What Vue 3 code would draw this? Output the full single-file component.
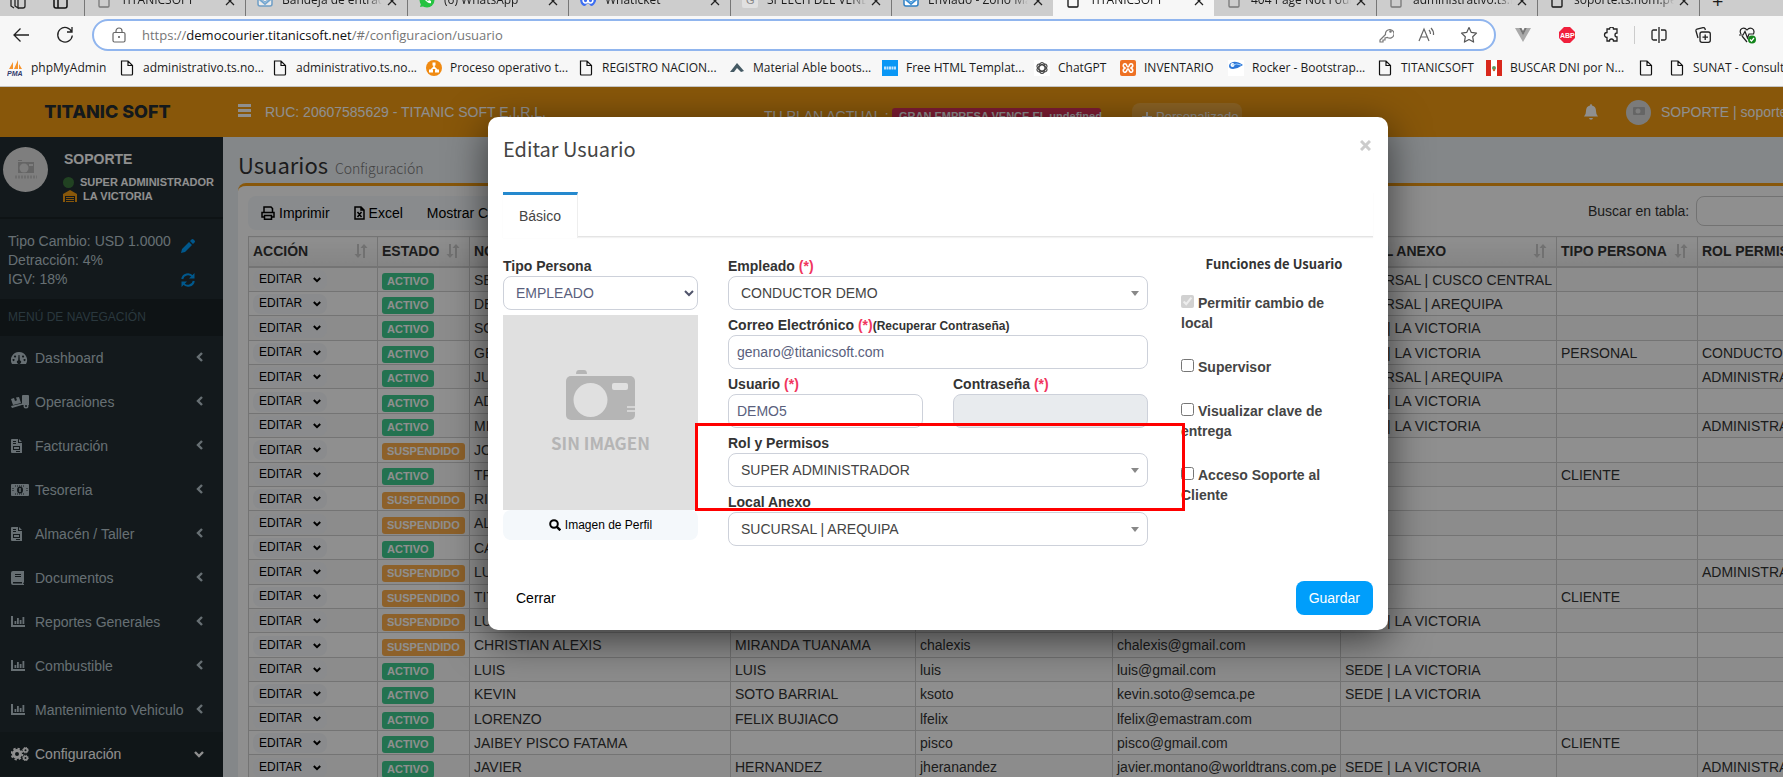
<script setup>
import { ref } from 'vue'

const tabs = [
  { title: 'TITANICSOFT', icon: 'doc' },
  { title: 'Bandeja de entrada', icon: 'mail', dim: true },
  { title: '(6) WhatsApp', icon: 'whats' },
  { title: 'Whaticket', icon: 'ticket' },
  { title: 'SPEECH DEL VENDEDOR', icon: 'g' },
  { title: 'Enviado - Zoho Mail', icon: 'mail' },
  { title: 'TITANICSOFT', icon: 'doc', active: true },
  { title: '404 Page Not Found', icon: 'doc' },
  { title: 'administrativo.ts.nom', icon: 'doc' },
  { title: 'soporte.ts.nom.pe/', icon: 'doc', dark: true }
]

const bookmarks = [
  { title: 'phpMyAdmin', icon: 'pma' },
  { title: 'administrativo.ts.no...', icon: 'doc' },
  { title: 'administrativo.ts.no...', icon: 'doc' },
  { title: 'Proceso operativo t...', icon: 'proc' },
  { title: 'REGISTRO NACION...', icon: 'doc' },
  { title: 'Material Able boots...', icon: 'able' },
  { title: 'Free HTML Templat...', icon: 'free' },
  { title: 'ChatGPT', icon: 'gpt' },
  { title: 'INVENTARIO', icon: 'xampp' },
  { title: 'Rocker - Bootstrap...', icon: 'rocker' },
  { title: 'TITANICSOFT', icon: 'doc' },
  { title: 'BUSCAR DNI por N...', icon: 'peru' },
  { title: '', icon: 'doc' },
  { title: 'SUNAT - Consulta', icon: 'doc' }
]

const menu = [
  { label: 'Dashboard', icon: 'gauge' },
  { label: 'Operaciones', icon: 'truck' },
  { label: 'Facturación', icon: 'file' },
  { label: 'Tesoreria', icon: 'money' },
  { label: 'Almacén / Taller', icon: 'file' },
  { label: 'Documentos', icon: 'book' },
  { label: 'Reportes Generales', icon: 'chart' },
  { label: 'Combustible', icon: 'chart' },
  { label: 'Mantenimiento Vehiculo', icon: 'chart' },
  { label: 'Configuración', icon: 'cogs', open: true }
]

const columns = ['ACCIÓN', 'ESTADO', 'NOMBRES', 'APELLIDOS', 'USUARIO', 'CORREO', 'LOCAL ANEXO', 'TIPO PERSONA', 'ROL PERMISOS']

const LV = 'SEDE | LA VICTORIA'
const AQ = 'SUCURSAL | AREQUIPA'
const rows = [
  [1, 'SE', '', '', '', 'SUCURSAL | CUSCO CENTRAL', '', ''],
  [1, 'DE', '', '', '', AQ, '', ''],
  [1, 'SO', '', '', '', LV, '', ''],
  [1, 'GE', '', '', '', LV, 'PERSONAL', 'CONDUCTOR'],
  [1, 'JU', '', '', '', AQ, '', 'ADMINISTRADOR'],
  [1, 'AD', '', '', '', LV, '', ''],
  [1, 'MI', '', '', '', LV, '', 'ADMINISTRADOR'],
  [0, 'JO', '', '', '', '', '', ''],
  [1, 'TR', '', '', '', '', 'CLIENTE', ''],
  [0, 'RI', '', '', '', '', '', ''],
  [0, 'AL', '', '', '', '', '', ''],
  [1, 'CA', '', '', '', '', '', ''],
  [0, 'LU', '', '', '', '', '', 'ADMINISTRADOR'],
  [0, 'TIT', '', '', '', '', 'CLIENTE', ''],
  [0, 'LU', '', '', '', LV, '', ''],
  [0, 'CHRISTIAN ALEXIS', 'MIRANDA TUANAMA', 'chalexis', 'chalexis@gmail.com', '', '', ''],
  [1, 'LUIS', 'LUIS', 'luis', 'luis@gmail.com', LV, '', ''],
  [1, 'KEVIN', 'SOTO BARRIAL', 'ksoto', 'kevin.soto@semca.pe', LV, '', ''],
  [1, 'LORENZO', 'FELIX BUJIACO', 'lfelix', 'lfelix@emastram.com', '', '', ''],
  [1, 'JAIBEY PISCO FATAMA', '', 'pisco', 'pisco@gmail.com', '', 'CLIENTE', ''],
  [1, 'JAVIER', 'HERNANDEZ', 'jheranandez', 'javier.montano@worldtrans.com.pe', LV, '', 'ADMINISTRADOR']
]

const functions = ref([
  { id: 'f-local', label: 'Permitir cambio de local', on: true, off: true },
  { id: 'f-super', label: 'Supervisor', on: false, off: false },
  { id: 'f-clave', label: 'Visualizar clave de entrega', on: false, off: false },
  { id: 'f-soporte', label: 'Acceso Soporte al Cliente', on: false, off: false }
])
const email = ref('genaro@titanicsoft.com')
const user = ref('DEMO5')
const search = ref('')
</script>

<template>
  <div class="screen">
    <header class="chrome">
      <nav class="tabs">
        <div class="lead">
          <svg width="18" height="18" viewBox="0 0 18 18" fill="none" stroke="#222" stroke-width="1.3"><path d="M2 4v9l3 2M6 3v10l3 2V4M9 15h5q2 0 2-2V5q0-2-2-2H9" /></svg>
          <svg width="18" height="18" viewBox="0 0 18 18" fill="none" stroke="#111" stroke-width="1.5"><rect x="3" y="2" width="13" height="13" rx="2" /><path d="M7 2v13M3 6h13" /></svg>
        </div>
        <div v-for="(t, i) in tabs" :key="i" class="tab" :class="{ active: t.active, quiet: t.dim }">
          <svg class="fav" width="16" height="16" viewBox="0 0 16 16">
            <path v-if="t.icon === 'doc'" d="M3 1h7l3 3v10q0 1-1 1H4q-1 0-1-1z" fill="none" :stroke="t.active || t.dark ? '#111' : '#777'" stroke-width="1.3" />
            <g v-else-if="t.icon === 'mail'"><rect x="1" y="1" width="14" height="13" rx="2" fill="#fff" stroke="#2f7fc2" stroke-width="1.5" /><path d="M2 7l6 5 6-5" fill="none" stroke="#3b8fd4" stroke-width="1.8" /><path d="M4 3h8v4l-4 3-4-3z" fill="#fff" stroke="#3b8fd4" /></g>
            <g v-else-if="t.icon === 'whats'"><circle cx="8" cy="8" r="7.5" fill="#25c341" /><path d="M1 15l1.500-5 4 4z" fill="#25c341" /><path d="M5 4q-1 2 2 5t5 2l0-2-2-1-1 1q-2-1-2-2l1-1-1-2z" fill="#fff" /></g>
            <g v-else-if="t.icon === 'ticket'"><path d="M0 3h16v6q-2 5-5 5l-3-3-3 3q-4 0-5-6z" fill="#3d6ef0" /><path d="M3 7q0 4 2.500 4T8 7q0 4 2.500 4T13 7" fill="none" stroke="#fff" stroke-width="1.500" /></g>
            <g v-else><rect width="16" height="16" rx="2" fill="#e0e0e0" /><text x="4" y="12" font-size="11" font-family="Liberation Sans, sans-serif" fill="#888">G</text></g>
          </svg>
          <span class="tab-title">{{ t.title }}</span>
          <svg width="10" height="10" viewBox="0 0 10 10" stroke="#222" stroke-width="1.3"><path d="M1 1l8 8M9 1L1 9" /></svg>
        </div>
        <span class="plus">+</span>
      </nav>

      <div class="toolbar">
        <svg width="18" height="18" viewBox="0 0 18 18" fill="none" stroke="#222" stroke-width="1.300"><path d="M17 9H2M8.500 2.500L2 9l6.500 6.500" /></svg>
        <svg width="18" height="18" viewBox="0 0 18 18" fill="none" stroke="#222" stroke-width="1.300"><path d="M15.800 6A7.300 7.300 0 1 0 16.300 9.500M16 1v5h-5" /></svg>
        <div class="address">
          <svg width="14" height="16" viewBox="0 0 14 16" fill="none" stroke="#666" stroke-width="1.200"><rect x="1" y="5.500" width="12" height="9.500" rx="1.500" /><path d="M4 5.500V4a3 3 0 0 1 6 0v1.500" /><circle cx="7" cy="10" r="1" fill="#555" stroke="none" /></svg>
          <p class="url">https://<b>democourier.titanicsoft.net</b>/#/configuracion/usuario</p>
          <svg width="18" height="16" viewBox="-4 0 18 16" fill="none" stroke="#777" stroke-width="1.200"><path d="M5.500 7.500L0 13v2h3v-2h2v-2l2.500-.5A4.300 4.300 0 1 0 5.500 7.500z" /><circle cx="10.500" cy="4.500" r=".7" fill="#777" /></svg>
          <svg width="18" height="16" viewBox="0 0 18 16" fill="none" stroke="#666" stroke-width="1.200"><path d="M1 14L6 2l5 12M3 10h6M11 3q1.500 1.500 1.500 4M13 1q3 3 2.500 7" /></svg>
          <svg width="18" height="18" viewBox="0 0 18 18" fill="none" stroke="#555" stroke-width="1.200" stroke-linejoin="round"><path d="M9 1.500l2.300 4.900 5.200.7-3.800 3.700.9 5.300L9 13.500l-4.600 2.600.9-5.300L1.500 7.100l5.200-.7z" /></svg>
        </div>
        <div class="tools">
          <svg width="16" height="16" viewBox="0 0 16 16"><path d="M0 1h4l4 7 4-7h4L8 15z" fill="#aaa" /><path d="M4 1h2.500L8 4l1.500-3H12L8 8.500z" fill="#777" /></svg>
          <svg width="16" height="16" viewBox="0 0 16 16"><path d="M5 0h6l5 5v6l-5 5H5l-5-5V5z" fill="#f0203c" /><text x="1" y="11" font-size="7" font-weight="700" font-family="Liberation Sans, sans-serif" fill="#fff">ABP</text></svg>
          <svg width="16" height="16" viewBox="0 0 16 16" fill="none" stroke="#222" stroke-width="1.300"><path d="M4 2h2.500a2 2 0 0 1 4 0H14v4a2 2 0 0 0 0 4v4h-3.500a2 2 0 0 0-4 0H4v-3.500a2.300 2.300 0 0 1 0-5z" /></svg>
          <i class="rule"></i>
          <svg width="16" height="16" viewBox="0 0 16 16" fill="none" stroke="#222" stroke-width="1.300"><path d="M8 0v16M6 3H2.500Q1 3 1 4.500v7Q1 13 2.500 13H6M10 3h3.500Q15 3 15 4.500v7q0 1.500-1.500 1.500H10" /></svg>
          <svg width="16" height="16" viewBox="0 0 16 16" fill="none" stroke="#222" stroke-width="1.300"><rect x="5" y="5" width="10.300" height="10.300" rx="2" /><path d="M10.200 7.500v5.500M7.500 10.200H13M3 11L1 4q-.3-1.500 1-2l6-1.300q1.500-.2 2 1l.4 1.300" /></svg>
          <svg width="17" height="17" viewBox="0 0 17 17" fill="none" stroke="#222" stroke-width="1.200"><path d="M2 7Q0 3 3 1.500 6 .5 8 3q2-2.500 5-1.500 3 1.500 1.500 5.500M3 9l5 6M0 8h4l2-3.500L8.500 11 10 7h5" /><circle cx="13" cy="12.500" r="4" fill="#13851b" stroke="none" /><path d="M11 12.500l1.500 1.500 2.500-3" stroke="#fff" /></svg>
        </div>
      </div>

      <div class="bookmarks">
        <a v-for="(b, i) in bookmarks" :key="i" class="bookmark" href="#">
          <svg width="16" height="16" viewBox="0 0 16 16">
            <path v-if="b.icon === 'doc'" d="M2.500 1h6.500l4.500 4.500V14q0 1-1 1h-9q-1 0-1-1zM9 1v4.500h4.500" fill="none" stroke="#111" stroke-width="1.200" />
            <g v-else-if="b.icon === 'pma'"><path d="M2 9L6 2v7zM7 9l4-9v9zM12 9V4l3 5z" fill="#f6932b" /><text x="0" y="16" font-size="7" font-weight="700" font-style="italic" font-family="Liberation Sans, sans-serif" fill="#333a6d">PMA</text></g>
            <g v-else-if="b.icon === 'proc'"><circle cx="8" cy="8" r="8" fill="#f08a12" /><path d="M8 4v5M8 7l-3 3M8 7l3 3" stroke="#fff" stroke-width="1.500" /><path d="M6.500 2.500h3v3h-3zM3 9.500h4v3H3zM9 9.500h4v3H9z" fill="#fff" /></g>
            <path v-else-if="b.icon === 'able'" d="M1 12L8 3l7 8-3 1-4-4-3 4z" fill="#455a64" />
            <g v-else-if="b.icon === 'free'"><rect width="16" height="16" fill="#0a97f5" /><path d="M2 8h12" stroke="#bfe4ff" stroke-width="3" stroke-dasharray="2 .5" /></g>
            <g v-else-if="b.icon === 'gpt'" fill="none" stroke="#444" stroke-width="1.200"><rect width="16" height="16" fill="#fff" stroke="none" /><ellipse cx="8" cy="8" rx="3" ry="5.500" /><ellipse cx="8" cy="8" rx="3" ry="5.500" transform="rotate(60 8 8)" /><ellipse cx="8" cy="8" rx="3" ry="5.500" transform="rotate(120 8 8)" /></g>
            <g v-else-if="b.icon === 'xampp'"><rect width="16" height="16" rx="2" fill="#ee7123" /><path d="M4 4q2-1 3 2 1 2 2 0 1-3 3-2 2 2-1 4 3 2 1 4-2 1-3-2-1-2-2 0-1 3-3 2-2-2 1-4-3-2-1-4z" fill="none" stroke="#fff" stroke-width="1.600" /></g>
            <g v-else-if="b.icon === 'rocker'"><rect width="16" height="16" fill="#fff" /><path d="M15 5Q9 1 5 2T1 6q0 3 4 3 6-1 10-4z" fill="#2d77d8" /><circle cx="4.500" cy="5" r="2" fill="#fff" /><path d="M4 5q5-2 9 0" stroke="#9fd0ff" fill="none" /></g>
            <g v-else><rect width="16" height="16" fill="#fff" /><path d="M0 0h5v16H0zM11 0h5v16h-5z" fill="#d9281c" /><circle cx="8" cy="8" r="2" fill="#5a9a62" /><circle cx="8" cy="10" r="1.200" fill="#c8642f" /></g>
          </svg>
          <span>{{ b.title }}</span>
        </a>
      </div>
    </header>

    <div class="page">
      <header class="topbar">
        <a class="brand" href="#">TITANIC SOFT</a>
        <button class="burger" type="button" aria-label="Menú"><i></i><i></i><i></i></button>
        <span class="ruc">RUC: 20607585629 - TITANIC SOFT E.I.R.L.</span>
        <span class="plan">TU PLAN ACTUAL :</span>
        <span class="plan-badge">GRAN EMPRESA VENCE EL undefined</span>
        <button class="custom" type="button">
          <svg width="10" height="10" viewBox="0 0 10 10"><path d="M4 0h2v4h4v2H6v4H4V6H0V4h4z" fill="#fff" /></svg>Personalizado
        </button>
        <svg class="bell" width="14" height="16" viewBox="0 0 14 16" fill="#fff"><path d="M7 0q1 0 1 1.500 4 .8 4 5.500 0 4 2 5.500H0Q2 11 2 7q0-4.700 4-5.500Q6 0 7 0zM5 14h4q-.3 1.700-2 1.700T5 14z" /></svg>
        <span class="mini-avatar"><svg width="12" height="10" viewBox="0 0 12 10"><rect width="12" height="8" rx="1" fill="#b5b5b5" /><circle cx="5" cy="4" r="2.500" fill="#e0e0e0" /></svg></span>
        <span class="who">SOPORTE | soporte</span>
      </header>

      <div class="body">
        <aside class="sidebar">
          <div class="profile">
            <span class="avatar"><svg width="24" height="24" viewBox="0 0 24 24"><path d="M4 3h4V2H4zM4 4h16v11H4z" fill="#b5b5b5" /><circle cx="10" cy="10" r="4.500" fill="#e0e0e0" /><path d="M15 6h4v2h-4z" fill="#e0e0e0" /><path d="M1 19h22" stroke="#c4c4c4" stroke-width="3" stroke-dasharray="2 1" /></svg></span>
            <div>
              <strong>SOPORTE</strong>
              <p class="role"><i class="dot"></i>SUPER ADMINISTRADOR</p>
              <p class="place"><svg width="14" height="12" viewBox="0 0 14 12"><path d="M0 4l7-4 7 4v8h-2V6H2v6H0zM3 7h8v1H3zM3 9h8v1H3zM3 11h8v1H3z" fill="#f39c12" /></svg>LA VICTORIA</p>
            </div>
          </div>
          <div class="rates">
            <p>Tipo Cambio: USD 1.0000<br />Detracción: 4%<br />IGV: 18%</p>
            <div class="rate-icons">
              <svg width="14" height="14" viewBox="0 0 14 14" fill="#009efb"><path d="M0 14l1-4 7-7 3 3-7 7zM9 2l1.500-1.500q1-1 2 0l1 1q1 1 0 2L12 5z" /></svg>
              <svg width="14" height="14" viewBox="0 0 14 14" fill="none" stroke="#009efb" stroke-width="2"><path d="M1.200 6A5.800 5.800 0 0 1 11.500 3.500M12.800 8A5.800 5.800 0 0 1 2.500 10.500" /><path d="M13.500 0v5.500H8zM.500 14V8.500H6z" fill="#009efb" stroke="none" /></svg>
            </div>
          </div>
          <h4>MENÚ DE NAVEGACIÓN</h4>
          <a v-for="m in menu" :key="m.label" class="item" :class="{ open: m.open }" href="#">
            <svg width="18" height="14" viewBox="0 0 18 14" fill="currentColor">
              <path v-if="m.icon === 'gauge'" fill-rule="evenodd" d="M8 1a8 8 0 0 1 7 12H1A8 8 0 0 1 8 1zM7.500 4l-.3 5.200a2 2 0 1 0 1.600 0L8.500 4zM4 4.500a1 1 0 1 0 .1 0zM12 4.500a1 1 0 1 0 .1 0zM2.500 8a1 1 0 1 0 .1 0zM13.500 8a1 1 0 1 0 .1 0z" />
              <g v-else-if="m.icon === 'truck'"><path d="M0 4l3-1 1 3 2-.7L5 2.500 8 2l2 6-8 2zM0 11l11-2.500V1q0-1 1-1h5q1 0 1 1v9H11L1 13z" /><circle cx="15" cy="11" r="2.500" /><circle cx="15" cy="11" r="1" fill="#222d32" /></g>
              <path v-else-if="m.icon === 'file'" fill-rule="evenodd" d="M1 0h6v4h4v10H1q-1 0-1-1V1q0-1 1-1zM8 0l3 3H8zM2 2v1h3V2zM2 4v1h3V4zM2 7v4h7V7zM3 8h5v2H3zM5 12v1h4v-1z" />
              <g v-else-if="m.icon === 'money'"><rect y="1" width="18" height="12" rx="1" /><path d="M4 3h10M4 11h10M2 5v4M16 5v4" stroke="#222d32" stroke-dasharray="1 1" /><ellipse cx="9" cy="7" rx="3" ry="3.500" fill="#222d32" /><path d="M9 5v4" stroke="currentColor" stroke-width="1.500" /></g>
              <path v-else-if="m.icon === 'book'" fill-rule="evenodd" d="M2 0h11v11l-1 2h1v1H2q-2 0-2-2V2q0-2 2-2zM4 3v1h6V3zM4 5v1h6V5zM2 11v1.500h9V11z" />
              <path v-else-if="m.icon === 'chart'" d="M0 1h2v9h12v2H0zM3.500 6h1.800v3H3.500zM6 3h1.800v6H6zM8.700 5h1.800v4H8.700zM11.500 2h1.800v7h-1.800z" />
              <g v-else fill="none" stroke="currentColor"><circle cx="6" cy="7" r="3.500" stroke-width="3" /><circle cx="6" cy="7" r="5.500" stroke-width="1.800" stroke-dasharray="2.300 2" /><circle cx="14.500" cy="3.200" r="1.800" stroke-width="1.600" /><circle cx="14.500" cy="11" r="1.800" stroke-width="1.600" /><circle cx="14.500" cy="3.200" r="2.800" stroke-dasharray="1.200 1" /><circle cx="14.500" cy="11" r="2.800" stroke-dasharray="1.200 1" /></g>
            </svg>
            <span>{{ m.label }}</span>
            <svg class="arrow" width="10" height="12" viewBox="0 0 10 12" fill="none" stroke="currentColor" stroke-width="2.400"><path :d="m.open ? 'M1 4l4 4 4-4' : 'M8 1L4 5l4 4'" /></svg>
          </a>
        </aside>

        <main class="content">
          <h1>Usuarios <small>Configuración</small></h1>
          <section class="box">
            <div class="actions">
              <div class="group">
                <button type="button"><svg width="14" height="14" viewBox="0 0 14 14" fill="none" stroke="#000" stroke-width="1.500"><path d="M3 6V1h7l1.500 1.500V6M3 11H1V6.500h12V11h-2M3.500 9.500h7v3.700h-7z" /></svg>Imprimir</button>
                <button type="button"><svg width="11" height="14" viewBox="0 0 11 14" fill="none" stroke="#000" stroke-width="1.500"><path d="M1 1h6l3 3v9H1zM3.500 6l4 5M7.500 6l-4 5M7 1v3h3" /></svg>Excel</button>
                <button type="button">Mostrar Columnas</button>
              </div>
              <label class="search">Buscar en tabla: <input v-model="search" type="search" /></label>
            </div>
            <table>
              <colgroup>
                <col class="c1" /><col class="c2" /><col class="c3" /><col class="c4" /><col class="c5" /><col class="c6" /><col class="c7" /><col class="c8" /><col class="c9" />
              </colgroup>
              <thead>
                <tr>
                  <th v-for="c in columns" :key="c">
                    <div class="th">{{ c }}<svg width="14" height="14" viewBox="0 0 14 14" fill="#c9c9c9"><path d="M3 0h2v10h2.500L4 14 .5 10H3zM9 14V4H6.500L10 0l3.500 4H11v10z" /></svg></div>
                  </th>
                </tr>
              </thead>
              <tbody>
                <tr v-for="(r, i) in rows" :key="i">
                  <td><button class="edit" type="button">EDITAR<svg width="8" height="6" viewBox="0 0 8 6" fill="none" stroke="#000" stroke-width="2"><path d="M.8 1L4 4.200 7.200 1" /></svg></button></td>
                  <td><span class="badge" :class="r[0] ? 'on' : 'off'">{{ r[0] ? 'ACTIVO' : 'SUSPENDIDO' }}</span></td>
                  <td v-for="n in 7" :key="n">{{ r[n] }}</td>
                </tr>
              </tbody>
            </table>
          </section>
        </main>
      </div>

      <div class="backdrop">
        <form class="modal" role="dialog" aria-labelledby="dlg-title" @submit.prevent>
          <div class="modal-head">
            <h2 id="dlg-title">Editar Usuario</h2>
            <button class="close" type="button" aria-label="Close"><svg width="11" height="11" viewBox="0 0 11 11" stroke="#ccc" stroke-width="3"><path d="M1 1l9 9M10 1l-9 9" /></svg></button>
          </div>
          <div class="tabline"><a class="pane-tab" href="#">Básico</a></div>
          <div class="fields">
            <div class="left">
              <label for="tipo">Tipo Persona</label>
              <div class="pick soft">
                <select id="tipo"><option>EMPLEADO</option></select>
                <svg width="10" height="7" viewBox="0 0 10 7" fill="none" stroke="#50546b" stroke-width="2"><path d="M1 1l4 4 4-4" /></svg>
              </div>
              <div class="photo">
                <svg width="70" height="50" viewBox="0 0 70 50"><path d="M10 4q0-4 3-4h5q3 0 3 4z" fill="#b5b5b5" /><rect x="0" y="6" width="69" height="44" rx="5" fill="#b5b5b5" /><ellipse cx="24.500" cy="30" rx="17" ry="17" fill="#e0e0e0" /><rect x="46" y="13" width="16" height="7" rx="2" fill="#e0e0e0" /><path d="M61 37h8M61 41h8" stroke="#e0e0e0" stroke-width="1.500" /></svg>
                <span>SIN IMAGEN</span>
              </div>
              <button class="photo-btn" type="button"><svg width="12" height="12" viewBox="0 0 12 12" fill="none" stroke="#000" stroke-width="2"><circle cx="5" cy="5" r="3.800" /><path d="M7.700 7.700l3.600 3.600" stroke-width="2.400" /></svg>Imagen de Perfil</button>
            </div>
            <div class="middle">
              <div class="field wide">
                <label for="emp">Empleado <em>(*)</em></label>
                <div class="pick"><select id="emp"><option>CONDUCTOR DEMO</option></select><i class="tri"></i></div>
              </div>
              <div class="field wide">
                <label for="mail">Correo Electrónico <em>(*)</em><small>(Recuperar Contraseña)</small></label>
                <input id="mail" v-model="email" type="text" />
              </div>
              <div class="field">
                <label for="usr">Usuario <em>(*)</em></label>
                <input id="usr" v-model="user" type="text" />
              </div>
              <div class="field">
                <label for="pwd">Contraseña <em>(*)</em></label>
                <input id="pwd" type="password" disabled />
              </div>
              <div class="field wide">
                <label for="rol">Rol y Permisos</label>
                <div class="pick"><select id="rol"><option>SUPER ADMINISTRADOR</option></select><i class="tri"></i></div>
              </div>
              <div class="field wide">
                <label for="loc">Local Anexo</label>
                <div class="pick"><select id="loc"><option>SUCURSAL | AREQUIPA</option></select><i class="tri"></i></div>
              </div>
            </div>
            <div class="right">
              <h3>Funciones de Usuario</h3>
              <div v-for="f in functions" :key="f.id" class="check">
                <input :id="f.id" v-model="f.on" type="checkbox" :disabled="f.off" />
                <label :for="f.id">{{ f.label }}</label>
              </div>
            </div>
          </div>
          <div class="modal-foot">
            <button class="cancel" type="button">Cerrar</button>
            <button class="save" type="submit">Guardar</button>
          </div>
          <div class="marker"></div>
        </form>
      </div>
    </div>
  </div>
</template>

<style>
html, body { overflow: hidden; }
</style>

<style scoped>
* { box-sizing: border-box; }
.screen {
  display: flex; flex-direction: column; height: 100vh; overflow: hidden;
  font: 14px/20px "Liberation Sans", Arial, sans-serif; color: #333;
}
p, h1, h2, h3, h4 { margin: 0; }
a { color: inherit; text-decoration: none; }
button, input, select { font: inherit; color: inherit; margin: 0; }
button { border: 0; background: none; padding: 0; cursor: pointer; }
svg { flex: none; }

/* browser frame */
.chrome { flex: none; background: #f7f7f7; font-family: "Open Sans", "Noto Sans", sans-serif; font-size: 12px; color: #1b1b1b; border-bottom: 1px solid #c4c4c4; }
.tabs { display: flex; height: 16px; background: #cdcdcd; overflow: hidden; }
.lead { flex: none; width: 84px; display: flex; gap: 24px; padding-left: 9px; height: 16px; align-items: center; margin-top: -6px; }
.tab { flex: none; display: flex; align-items: center; width: 162px; height: 32px; margin-top: -16px; padding: 0 10px 0 11px; gap: 9px; border-left: 1px solid #777; }
.tab:nth-child(2n) { width: 161px; }
.tab svg:last-child { margin-top: 2px; }
.tab.active { background: #f7f7f7; border-color: #f7f7f7; }
.tab.active + .tab { border-color: #cdcdcd; }
.tab.quiet .fav { opacity: .6; }
.tab-title { flex: 1; margin-right: -4px; white-space: nowrap; overflow: hidden; line-height: 20px; mask-image: linear-gradient(90deg, #000 85%, transparent); }
.plus { border-left: 1px solid #777; padding-left: 12px; font-size: 20px; line-height: 2px; }
.toolbar { display: flex; align-items: center; height: 38px; padding: 0 27px 0 12px; gap: 26px; }
.address { flex: 1; display: flex; align-items: center; height: 32px; margin: 0 7px 0 -8px; padding: 0 16px 0 18px; border: 2px solid #90b5ee; border-radius: 16px; background: #fff; gap: 24px; }
.url { flex: 1; font-size: 13px; color: #767676; margin-left: -8px; }
.url b { font-weight: 400; color: #111; }
.tools { display: flex; align-items: center; gap: 28px; margin-left: -14px; }
.rule { width: 1px; height: 18px; background: #ccc; margin: 0 -12px 0 -13px; }
.bookmarks {
  display: grid; height: 32px; padding: 0 0 4px 7px; overflow: hidden; align-items: center;
  grid-template-columns: 112px 153px 154px 152px 151px 153px 152px 86px 108px 149px 109px 152px 31px 120px;
}
.bookmark { display: flex; align-items: center; gap: 8px; white-space: nowrap; }

/* app header */
.page { position: relative; flex: 1; min-height: 0; display: flex; flex-direction: column; overflow: hidden; background: #ecf0f5; }
.topbar { flex: none; display: flex; align-items: center; height: 50px; background: #f39c12; color: #fff; overflow: hidden; white-space: nowrap; }
.brand { flex: none; width: 223px; padding-right: 8px; text-align: center; font: 800 18px/20px Inter, sans-serif; color: #252d33; }
.burger { flex: none; display: grid; gap: 2px; width: 13px; margin: 0 14px 3px 15px; }
.burger i { height: 3px; background: #fff; }
.ruc { flex: none; width: 499px; }
.plan { flex: none; width: 128px; margin-top: 8px; }
.plan-badge { flex: none; width: 209px; margin: 8px 31px 0 0; padding: 0 7px; background: #e0325b; border-radius: 3px; font-size: 11px; font-weight: 700; line-height: 17px; }
.custom { flex: none; display: flex; align-items: center; gap: 4px; width: 110px; height: 27px; margin-top: 9px; padding-left: 10px; background: #f7af41; border-radius: 8px; font-size: 13px; }
.bell { margin-left: 342px; }
.mini-avatar { display: grid; place-items: center; width: 25px; height: 25px; margin: 0 10px 0 28px; border-radius: 50%; background: #dcdcdc; flex: none; }

/* sidebar */
.body { flex: 1; min-height: 0; display: flex; }
.sidebar { flex: none; width: 223px; background: #222d32; color: #b8c7ce; }
.profile { display: flex; gap: 15px; height: 82px; padding: 10px 0 0 3px; color: #fff; border-bottom: 2px solid #1a2226; }
.avatar { display: grid; place-items: center; width: 45px; height: 45px; border-radius: 50%; background: #e0e0e0; }
.profile strong { display: block; margin: 2px 0 6px 1px; }
.role, .place { display: flex; align-items: center; gap: 6px; font-size: 11px; font-weight: 700; line-height: 14px; white-space: nowrap; }
.dot { width: 11px; height: 11px; border-radius: 50%; background: #3c763d; }
.rates { display: flex; gap: 10px; height: 80px; padding: 13px 8px 0; line-height: 19px; }
.rate-icons { display: grid; align-content: start; gap: 20px; padding-top: 7px; }
.sidebar h4 { height: 37px; padding-left: 8px; font-size: 12px; line-height: 37px; font-weight: 400; background: #1a2226; color: #4b646f; }
.item { display: flex; align-items: center; height: 44px; padding: 0 19px 0 11px; gap: 6px; }
.item span { flex: 1; white-space: nowrap; }
.item.open { background: #1e282c; color: #fff; }

/* list */
.content { flex: 1; min-width: 0; padding: 11px 0 0 15px; overflow: hidden; }
h1 { font: 400 22px/32px "Noto Sans CJK SC", sans-serif; height: 35px; }
h1 small { font-size: 14px; font-weight: 300; color: #777; margin-left: 2px; }
.box { width: 1860px; padding: 10px; background: #fff; border-top: 3px solid #f39c12; border-radius: 8px; }
.actions { display: flex; justify-content: space-between; align-items: flex-start; width: 1535px; height: 40px; }
.group { display: flex; align-items: center; height: 34px; padding: 0 13px; background: #f4f8fb; border-radius: 8px; gap: 24px; color: #000; }
.group button { display: flex; align-items: center; gap: 4px; }
table { table-layout: fixed; width: 1600px; border-collapse: collapse; }
.c1 { width: 129px; } .c2 { width: 92px; } .c3 { width: 261px; } .c4 { width: 185px; } .c5 { width: 197px; }
.c6 { width: 228px; } .c7 { width: 216px; } .c8 { width: 141px; } .c9 { width: 151px; }
th, td { border: 1px solid #cfcfcf; padding: 0 4px; text-align: left; white-space: nowrap; overflow: hidden; }
th { height: 30px; border-bottom: 2px solid #cfcfcf; background: linear-gradient(#fff, #ececec); }
.th { display: flex; justify-content: space-between; align-items: center; padding-right: 5px; }
td { line-height: 1.6; padding-top: 1px; }
tbody tr:nth-child(odd) { background: #f9f9f9; }
.edit { display: flex; align-items: center; gap: 11px; height: 20px; padding: 0 6px; background: #f6f8fb; border-radius: 8px; font-size: 12px; color: #000; }
.badge { display: block; width: max-content; height: 17px; margin-top: 3px; padding: 0 5px; border-radius: 3px; color: #fff; font-size: 11px; font-weight: 700; line-height: 17px; }
.badge.on { background: #3fcb8f; }
.badge.off { background: #fbad4b; }

/* dialog */
.backdrop { position: absolute; inset: 0; background: rgba(0, 0, 0, .44); padding: 30px 0 0 93px; }
.modal { position: relative; width: 900px; max-width: 100%; margin: 0 auto; padding: 15px; background: #fff; border-radius: 10px; box-shadow: 0 10px 40px rgba(0, 0, 0, .6); }
.modal-head { display: flex; justify-content: space-between; align-items: flex-start; height: 60px; padding-top: 1px; }
h2 { font: 400 20px/32px "Noto Sans CJK SC", sans-serif; color: #444; }
.close { height: 30px; padding: 0 2px 5px; }
.tabline { display: flex; height: 45px; border-bottom: 1px solid #e4e4e4; box-shadow: 0 1px 1px rgba(0, 0, 0, .05); }
.pane-tab { height: 46px; padding: 0 16px; border-top: 3px solid #2589ce; border-right: 1px solid #eee; background: #fff; line-height: 43px; color: #444; }
.fields { display: grid; grid-template-columns: 195px 420px 189px; column-gap: 30px; padding-top: 19px; }
label { display: block; height: 20px; font-weight: 700; }
label em { font-style: normal; color: #f0365e; }
label small { font-size: 12px; }
.search { display: flex; align-items: center; gap: 7px; width: 195px; height: 30px; white-space: nowrap; font-weight: 400; }
.search input { width: 200px; flex: none; height: 30px; border: 1px solid #ccc; border-radius: 8px; background: #fff; }
.middle { display: grid; grid-template-columns: 1fr 1fr; column-gap: 30px; row-gap: 5px; align-content: start; }
.wide { grid-column: span 2; }
.pick { position: relative; display: flex; align-items: center; }
.pick select, .field input { width: 100%; height: 34px; border: 1px solid #cdd1da; border-radius: 8px; background: #fff; color: #444; padding: 0 12px; appearance: none; display: block; }
.field input, .pick.soft select { color: #5a5f7d; }
.field input { padding: 0 8px; }
.field input:disabled { background: #e8ebee; }
.pick svg { position: absolute; right: 4px; }
.tri { position: absolute; right: 9px; border: 4px solid transparent; border-top: 5px solid #888; border-bottom: 0; }
.photo { display: flex; flex-direction: column; align-items: center; height: 195px; margin-top: 5px; padding-top: 55px; background: #e0e0e0; }
.photo span { margin-top: 11px; font: 700 17px/24px "Noto Sans CJK SC", sans-serif; color: #b5b5b5; }
.photo-btn { display: flex; justify-content: center; align-items: center; gap: 4px; width: 100%; height: 30px; background: #f4f8fb; border-radius: 8px; font-size: 12px; color: #000; }
.right { padding-left: 3px; color: #444; }
h3 { font: 700 13px/16px "Noto Sans CJK SC", sans-serif; text-align: center; margin-bottom: 21px; color: #333; }
.check { margin-bottom: 24px; padding-right: 20px; }
.check input { float: left; width: 13px; height: 13px; margin: 2px 4px 0 0; }
.check label { height: auto; }
.modal-foot { display: flex; justify-content: space-between; align-items: center; padding-top: 34px; height: 69px; }
.modal-foot button { height: 34px; padding: 0 13px; color: #000; }
.modal-foot .save { background: #009efb; color: #fff; border-radius: 8px; }
.marker { position: absolute; left: 207px; top: 306px; width: 490px; height: 88px; border: 3px solid #f00; pointer-events: none; }
</style>
